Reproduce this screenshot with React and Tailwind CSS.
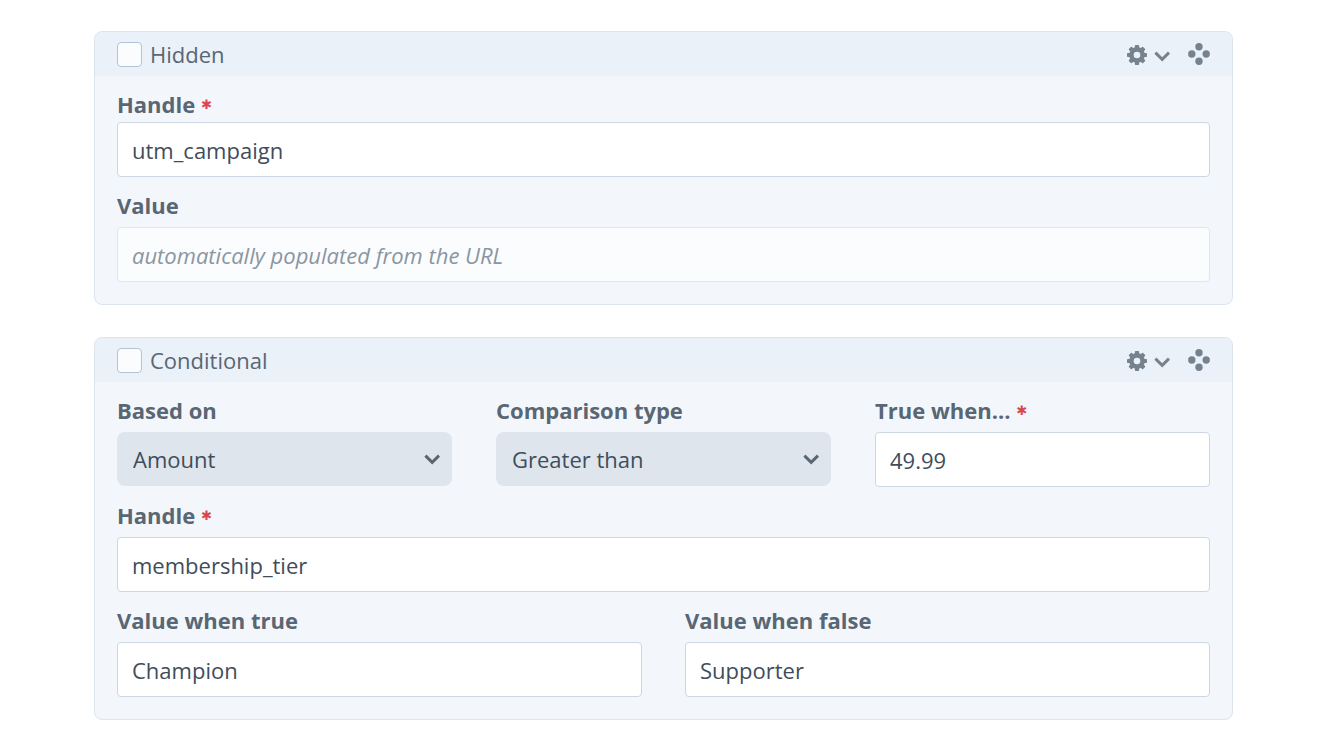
import React, { useState } from "react";

function GearIcon() {
  return (
    <svg viewBox="0 0 20 20" className="h-5 w-5" aria-hidden="true">
      <circle cx="10" cy="10" r="5.6" fill="none" stroke="currentColor" strokeWidth="4.6" />
      {[0, 45, 90, 135].map((angle) => (
        <g key={angle} transform={`rotate(${angle} 10 10)`} fill="currentColor">
          <rect x="7.9" y="0" width="4.2" height="4" rx="0.8" />
          <rect x="7.9" y="16" width="4.2" height="4" rx="0.8" />
        </g>
      ))}
    </svg>
  );
}

function ChevronIcon() {
  return (
    <svg viewBox="0 0 16 12" className="h-3 w-4" aria-hidden="true">
      <path d="M1.4 2.7 L8.2 9.3 L15 2.7" fill="none" stroke="currentColor" strokeWidth="3" />
    </svg>
  );
}

function MoveIcon() {
  return (
    <svg viewBox="0 0 22 22" className="h-[22px] w-[22px]" fill="currentColor" aria-hidden="true">
      <circle cx="11" cy="3.8" r="3.7" />
      <circle cx="3.8" cy="11" r="3.7" />
      <circle cx="18.2" cy="11" r="3.7" />
      <circle cx="11" cy="18.2" r="3.7" />
    </svg>
  );
}

function Block({ name, children }) {
  return (
    <section className="overflow-hidden rounded-lg border border-[#dce4ed] bg-[#f3f6fb]">
      <header className="flex h-11 items-center justify-between bg-[#eaf1f9] px-[22px]">
        <label className="flex items-center gap-2 text-[#596673]">
          <input
            type="checkbox"
            className="h-[25px] w-[25px] appearance-none rounded border border-[#b3c3d6] bg-[#fbfcfe] checked:bg-[#596673]"
          />
          {name}
        </label>
        <div className="flex items-center gap-[18px] text-[#76838f]">
          <button type="button" aria-label={`${name} settings`} className="flex items-center gap-[7px] pt-[2px]">
            <GearIcon />
            <span className="pt-[2px]">
              <ChevronIcon />
            </span>
          </button>
          <button type="button" aria-label={`Reorder ${name}`}>
            <MoveIcon />
          </button>
        </div>
      </header>
      <div className="px-[22px] pb-[22px]">{children}</div>
    </section>
  );
}

function Label({ htmlFor, required, children }) {
  return (
    <label htmlFor={htmlFor} className="flex items-center gap-[6px] pt-[13px] pb-px leading-[30px] font-bold text-[#596673]">
      {children}
      {required && (
        <span className="pt-[2px] font-['DejaVu_Sans'] text-[13px] leading-7 text-[#da4650]" aria-hidden="true">
          ✱
        </span>
      )}
    </label>
  );
}

function TextField({ id, label, required, tight, disabled, value, placeholder }) {
  return (
    <div className={tight ? "flex flex-col gap-[2px]" : "flex flex-col gap-[6px]"}>
      <Label htmlFor={id} required={required}>
        {label}
      </Label>
      <input
        id={id}
        type="text"
        defaultValue={value}
        placeholder={placeholder}
        required={required}
        disabled={disabled}
        className="h-[55px] w-full rounded border border-[#cdd6e3] bg-white px-[14px] text-[#3f4d5a] placeholder:text-[#8a96a1] placeholder:italic disabled:border-[#dfe6ef] disabled:bg-[#fbfcfe]"
      />
    </div>
  );
}

function SelectField({ id, label, options }) {
  const [value, setValue] = useState(options[0]);

  return (
    <div className="flex flex-col gap-[6px]">
      <Label htmlFor={id}>{label}</Label>
      <div className="relative">
        <select
          id={id}
          value={value}
          onChange={(e) => setValue(e.target.value)}
          className="h-[54px] w-full appearance-none rounded-lg bg-[#dee5ed] px-4 text-[#3f4d5a]"
        >
          {options.map((option) => (
            <option key={option}>{option}</option>
          ))}
        </select>
        <span className="pointer-events-none absolute inset-y-0 right-3 flex items-center text-[#596673]">
          <ChevronIcon />
        </span>
      </div>
    </div>
  );
}

export default function App() {
  return (
    <main className="flex min-h-screen flex-col gap-8 bg-white pt-[31px] pr-[97px] pb-6 pl-[94px] font-['Open_Sans',sans-serif] text-[22px] leading-[30px]">
      <Block name="Hidden">
        <TextField id="hidden-handle" label="Handle" required tight value="utm_campaign" />
        <TextField id="hidden-value" label="Value" disabled placeholder="automatically populated from the URL" />
      </Block>

      <Block name="Conditional">
        <div className="grid grid-cols-3 gap-x-11">
          <SelectField id="based-on" label="Based on" options={["Amount"]} />
          <SelectField id="comparison" label="Comparison type" options={["Greater than", "Less than", "Equal to"]} />
          <TextField id="true-when" label="True when..." required value="49.99" />
        </div>
        <TextField id="conditional-handle" label="Handle" required value="membership_tier" />
        <div className="grid grid-cols-2 gap-x-[43px]">
          <TextField id="value-true" label="Value when true" value="Champion" />
          <TextField id="value-false" label="Value when false" value="Supporter" />
        </div>
      </Block>
    </main>
  );
}
